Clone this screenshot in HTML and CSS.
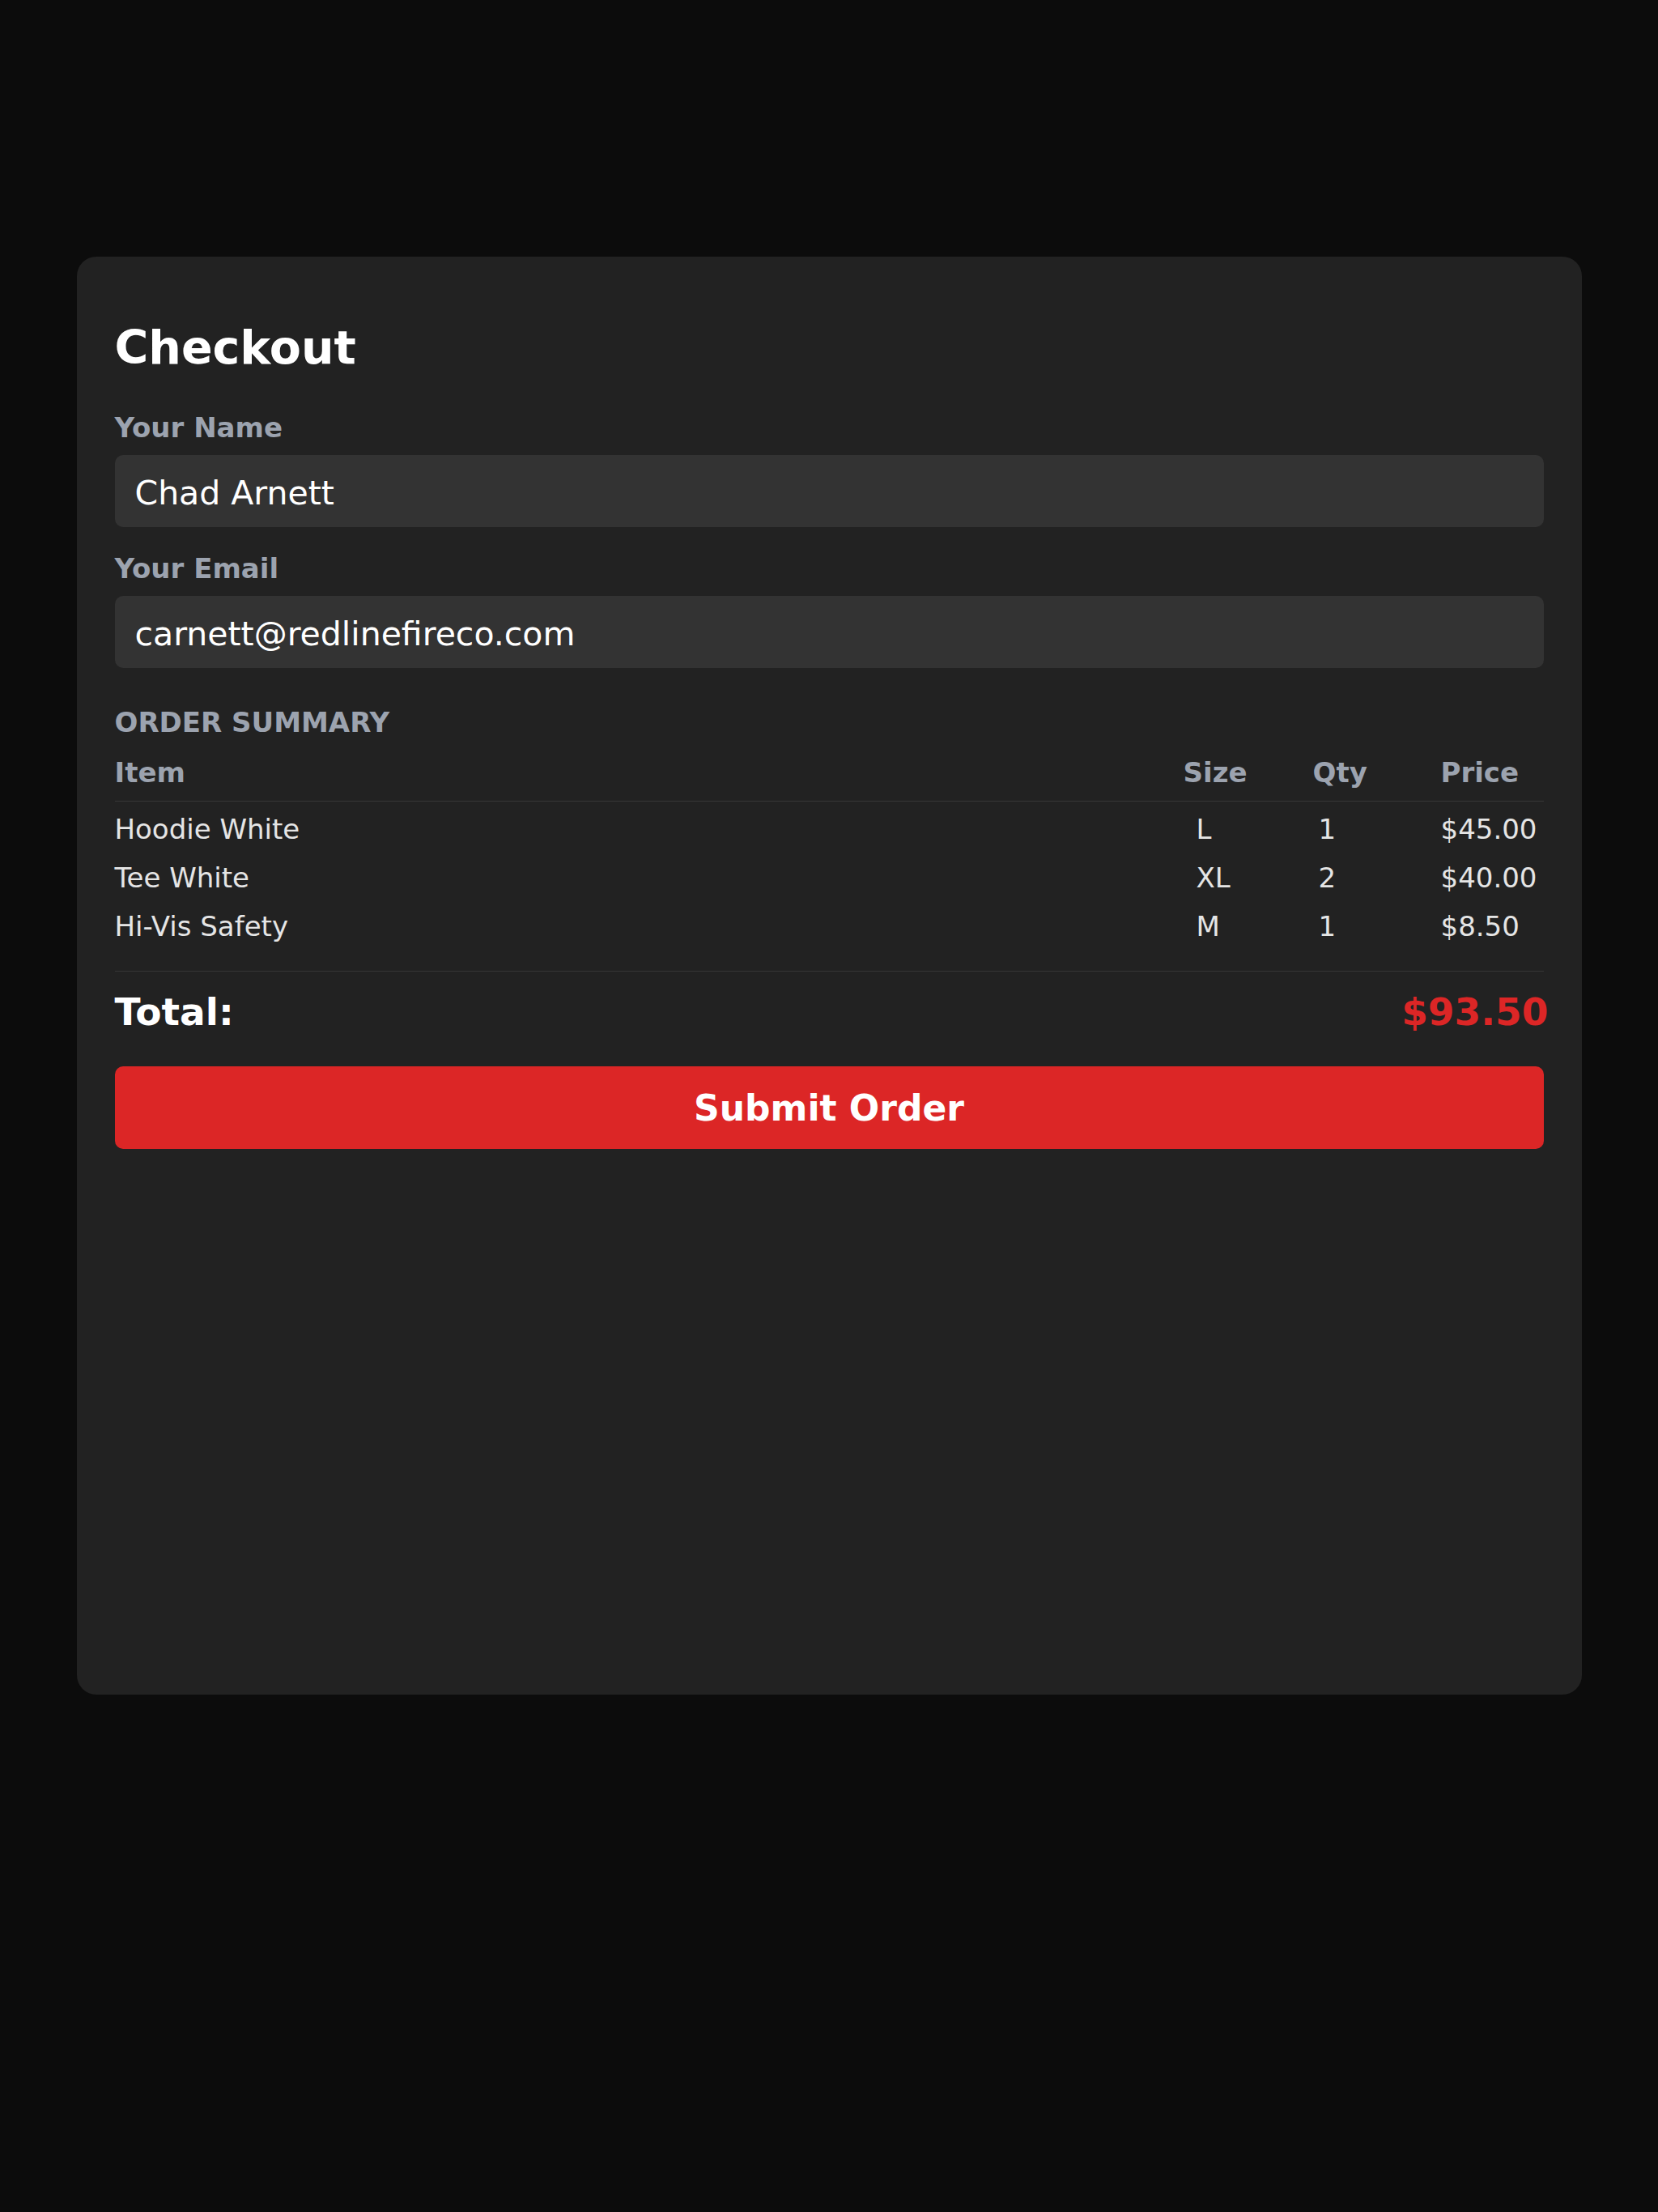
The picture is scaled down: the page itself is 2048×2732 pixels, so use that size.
FILE: index.html
```html
<!DOCTYPE html>
<html lang="en">
<head>
    <meta charset="UTF-8">
    <meta name="viewport" content="width=device-width, initial-scale=1.0">
    <title>Checkout</title>
    <link rel="stylesheet" href="styles.css">
</head>
<body>
    <div class="checkout">
        <h1 class="checkout-title">Checkout</h1>

        <label class="field-label" for="name">Your Name</label>
        <input id="name" class="field-input" type="text" value="Chad Arnett">

        <label class="field-label field-label--next" for="email">Your Email</label>
        <input id="email" class="field-input" type="email" value="carnett@redlinefireco.com">

        <h2 class="section-title">ORDER SUMMARY</h2>

        <div class="order-table">
            <div class="order-row order-head">
                <span>Item</span>
                <span>Size</span>
                <span>Qty</span>
                <span>Price</span>
            </div>
            <div class="order-body">
                <div class="order-row">
                    <span>Hoodie White</span>
                    <span class="cell-size">L</span>
                    <span class="cell-qty">1</span>
                    <span>$45.00</span>
                </div>
                <div class="order-row">
                    <span>Tee White</span>
                    <span class="cell-size">XL</span>
                    <span class="cell-qty">2</span>
                    <span>$40.00</span>
                </div>
                <div class="order-row">
                    <span>Hi-Vis Safety</span>
                    <span class="cell-size">M</span>
                    <span class="cell-qty">1</span>
                    <span>$8.50</span>
                </div>
            </div>
        </div>

        <div class="order-total">
            <span>Total:</span>
            <span class="total-amount">$93.50</span>
        </div>

        <button class="submit-btn" type="button">Submit Order</button>
    </div>
</body>
</html>
```

FILE: styles.css
```css
:root {
    --page-bg: #0c0c0c;
    --card-bg: #222222;
    --input-bg: #333333;
    --muted: #9ca3af;
    --text: #e5e5e5;
    --line: #363636;
    --red: #dc2626;
}

body {
    margin: 0;
    padding: 0;
    background: var(--page-bg);
    color: #ffffff;
    font-family: "DejaVu Sans", "Noto Sans", sans-serif;
}

/* Card */
.checkout {
    box-sizing: border-box;
    width: 1859px;
    height: 1776px;
    margin: 317px auto 0;
    padding: 47px;
    background: var(--card-bg);
    border-radius: 24px;
}

.checkout-title {
    margin: 31px 0 0;
    font-size: 57px;
    line-height: 68px;
    font-weight: bold;
    color: #ffffff;
}

/* Form fields */
.field-label {
    display: block;
    margin-top: 45px;
    font-size: 34px;
    line-height: 40px;
    font-weight: bold;
    color: var(--muted);
}

.field-label--next {
    margin-top: 31px;
}

.field-input {
    display: block;
    box-sizing: border-box;
    width: 100%;
    height: 89px;
    margin-top: 14px;
    padding: 5px 25px 0;
    border: none;
    border-radius: 10px;
    outline: none;
    background: var(--input-bg);
    color: #ffffff;
    font-family: "DejaVu Sans", "Noto Sans", sans-serif;
    font-size: 41px;
}

/* Order summary */
.section-title {
    margin: 47px 0 0;
    font-size: 34px;
    line-height: 40px;
    font-weight: bold;
    color: var(--muted);
}

.order-table {
    margin-top: 22px;
}

.order-row {
    display: grid;
    grid-template-columns: 1fr 160px 158px 127px;
    padding: 10px 0;
    font-size: 34px;
    line-height: 40px;
    color: var(--text);
}

.order-head {
    padding: 0 0 15px;
    border-bottom: 1px solid var(--line);
    font-weight: bold;
    color: var(--muted);
}

.order-body {
    padding: 4px 0 25px;
    border-bottom: 1px solid var(--line);
}

.cell-size {
    padding-left: 16px;
}

.cell-qty {
    padding-left: 7px;
}

/* Total */
.order-total {
    display: flex;
    justify-content: space-between;
    margin-top: 22px;
    font-size: 47px;
    line-height: 56px;
    font-weight: bold;
}

.total-amount {
    margin-right: -6px;
    color: var(--red);
}

.submit-btn {
    display: block;
    width: 100%;
    height: 102px;
    margin-top: 39px;
    border: none;
    border-radius: 10px;
    background: var(--red);
    color: #ffffff;
    font-family: "DejaVu Sans", "Noto Sans", sans-serif;
    font-size: 44px;
    font-weight: bold;
    cursor: pointer;
}
```
